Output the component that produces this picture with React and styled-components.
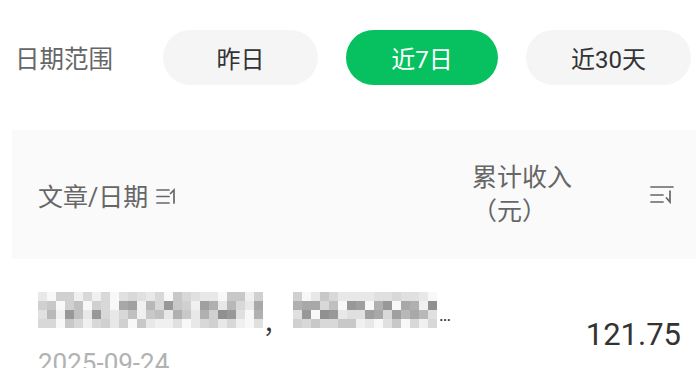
import styled, { createGlobalStyle } from "styled-components";

const GlobalStyle = createGlobalStyle`
	html, body {
		margin: 0;
		padding: 0;
		background: #ffffff;
	}

	body {
		font-family: "Roboto", "Noto Sans CJK SC", sans-serif;
		color: #333333;
	}
`;

const Page = styled.div`
	height: 368px;
	overflow: hidden;
	background: #ffffff;
`;

const FilterBar = styled.div`
	display: flex;
	align-items: center;
	padding: 30px 0 0 15px;
`;

const FilterLabel = styled.span`
	width: 148px;
	font-size: 24.5px;
	color: #666666;
`;

const Pills = styled.div`
	display: flex;
	gap: 28px;
`;

const Pill = styled.button`
	width: ${props => props.$w}px;
	height: 55px;
	border: none;
	border-radius: 28px;
	padding: 0;
	font-family: inherit;
	font-size: 24px;
	background: ${props => (props.$active ? "#07c160" : "#f5f5f5")};
	color: ${props => (props.$active ? "#ffffff" : "#333333")};
`;

const Table = styled.div`
	margin: 45px 0 0 12px;
`;

const HeadRow = styled.div`
	display: flex;
	align-items: center;
	height: 129px;
	background: #fafafa;
	color: #666666;
	font-size: 25px;
`;

const HeadCell = styled.div`
	flex: 1;
	display: flex;
	align-items: center;
	gap: 8px;
	padding-left: 26px;
`;

const IncomeHead = styled.div`
	width: 104px;
	line-height: 34px;
	margin-right: 74px;
`;

const IconWrap = styled.span`
	display: inline-flex;
	margin-right: ${props => props.$mr || 0}px;
	margin-top: ${props => props.$mt || 0}px;
`;

const Row = styled.div`
	display: flex;
	align-items: center;
	padding: 33px 15px 0 26px;
`;

const RowMain = styled.div`
	flex: 1;
	display: flex;
	flex-direction: column;
`;

const TitleLine = styled.div`
	display: flex;
	align-items: flex-end;
	height: 36px;
`;

const MosaicGrid = styled.div`
	display: grid;
	grid-template-columns: repeat(${props => props.$cols}, 9px);
	grid-auto-rows: 9px;
`;

const Cell = styled.span`
	background: ${props => `rgb(${props.$v}, ${props.$v}, ${props.$v})`};
`;

const Comma = styled.span`
	width: 30px;
	font-size: 24px;
	line-height: 24px;
	margin-bottom: -9px;
	color: #333333;
`;

const Ellipsis = styled.span`
	font-size: 18px;
	line-height: 18px;
	margin: 0 0 4px 2px;
	color: #333333;
	letter-spacing: -1px;
`;

const DateText = styled.div`
	margin-top: 20px;
	font-size: 26px;
	line-height: 30px;
	color: #b2b2b2;
`;

const Amount = styled.div`
	font-size: 31px;
	line-height: 36px;
	color: #333333;
`;

const SortIcon = ({ down }) => (
	<svg width="24" height="19" viewBox="0 0 24 19" fill="none" stroke="#666666" strokeWidth="1.7" strokeLinecap="round">
		{down ? (
			<>
				<path d="M1 2h22" />
				<path d="M1 10h12" />
				<path d="M1 17h12" />
				<path d="M20 6v11l-3.5-4" />
			</>
		) : (
			<>
				<path d="M1 4h12" />
				<path d="M1 10.5h12" />
				<path d="M1 17h12" />
				<path d="M18 17V4l-3.5 3.5" />
			</>
		)}
	</svg>
);

// deterministic mosaic so the blurred title looks the same on every run
const makeCells = (cols, seed) => {
	let s = seed;
	const next = () => {
		s = (s * 9301 + 49297) % 233280;
		return s / 233280;
	};
	const cells = [];
	for (let r = 0; r < 4; r++) {
		for (let c = 0; c < cols; c++) {
			const edge = r === 0 || r === 3;
			const gap = c % 3 === 2 && next() > 0.5;
			let v = edge ? 200 + next() * 50 : 140 + next() * 90;
			if (gap) v = 228 + next() * 22;
			cells.push(Math.round(v / 8) * 8);
		}
	}
	return cells;
};

const Mosaic = ({ cols, seed }) => (
	<MosaicGrid $cols={cols} aria-hidden="true">
		{makeCells(cols, seed).map((v, i) => (
			<Cell key={i} $v={Math.min(v, 248)} />
		))}
	</MosaicGrid>
);

const ranges = [
	{ label: "昨日", w: 155 },
	{ label: "近7日", w: 152, active: true },
	{ label: "近30天", w: 165 },
];

const App = () => (
	<>
		<GlobalStyle />
		<Page>
			<FilterBar>
				<FilterLabel>日期范围</FilterLabel>
				<Pills>
					{ranges.map(r => (
						<Pill key={r.label} $w={r.w} $active={r.active}>{r.label}</Pill>
					))}
				</Pills>
			</FilterBar>

			<Table>
				<HeadRow>
					<HeadCell>
						文章/日期
						<IconWrap $mt={2}><SortIcon /></IconWrap>
					</HeadCell>
					<IncomeHead>累计收入（元）</IncomeHead>
					<IconWrap $mr={22}><SortIcon down /></IconWrap>
				</HeadRow>

				<Row>
					<RowMain>
						<TitleLine>
							<Mosaic cols={25} seed={11} />
							<Comma>，</Comma>
							<Mosaic cols={16} seed={47} />
							<Ellipsis>...</Ellipsis>
						</TitleLine>
						<DateText>2025-09-24</DateText>
					</RowMain>
					<Amount>121.75</Amount>
				</Row>
			</Table>
		</Page>
	</>
);

export default App;
